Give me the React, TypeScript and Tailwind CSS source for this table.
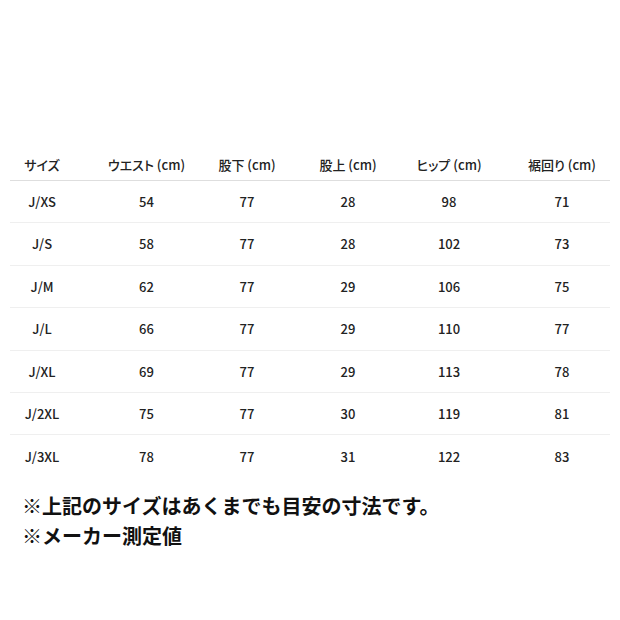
import React from "react";

const headers = ["サイズ", "ウエスト (cm)", "股下 (cm)", "股上 (cm)", "ヒップ (cm)", "裾回り (cm)"];
const rows: string[][] = [
  ["J/XS", "54", "77", "28", "98", "71"],
  ["J/S", "58", "77", "28", "102", "73"],
  ["J/M", "62", "77", "29", "106", "75"],
  ["J/L", "66", "77", "29", "110", "77"],
  ["J/XL", "69", "77", "29", "113", "78"],
  ["J/2XL", "75", "77", "30", "119", "81"],
  ["J/3XL", "78", "77", "31", "122", "83"],
];

const gridCls = "grid grid-cols-[104.5px_100.5px_101px_101px_113px_64px] items-center";

function Cell({ children }: { children: React.ReactNode }) {
  return (
    <div className="flex w-[64px] justify-center whitespace-nowrap">{children}</div>
  );
}

export default function App() {
  return (
    <div className="w-[620px] h-[620px] bg-white overflow-hidden">
      <div
        className="pt-[150px] px-[10px] text-[13px] font-medium text-[#222] [font-feature-settings:'palt']"
        style={{ fontFamily: '"Noto Sans CJK JP", sans-serif' }}
      >
        <div className={`${gridCls} h-[31px] border-b border-[#dedede] pb-[1px] pr-[2px]`}>
          {headers.map((h) => (
            <Cell key={h}>{h}</Cell>
          ))}
        </div>
        {rows.map((r, i) => (
          <div
            key={r[0]}
            className={`${gridCls} h-[42.4px] ${i < rows.length - 1 ? "border-b border-[#efefef]" : ""}`}
          >
            {r.map((v, j) => (
              <Cell key={j}>{v}</Cell>
            ))}
          </div>
        ))}
      </div>
      <div
        className="mt-[13px] pl-[22px] text-[20px] leading-[30px] font-bold text-[#111]"
        style={{ fontFamily: '"Noto Sans CJK JP", sans-serif' }}
      >
        <div>※上記のサイズはあくまでも目安の寸法です。</div>
        <div>※メーカー測定値</div>
      </div>
    </div>
  );
}
